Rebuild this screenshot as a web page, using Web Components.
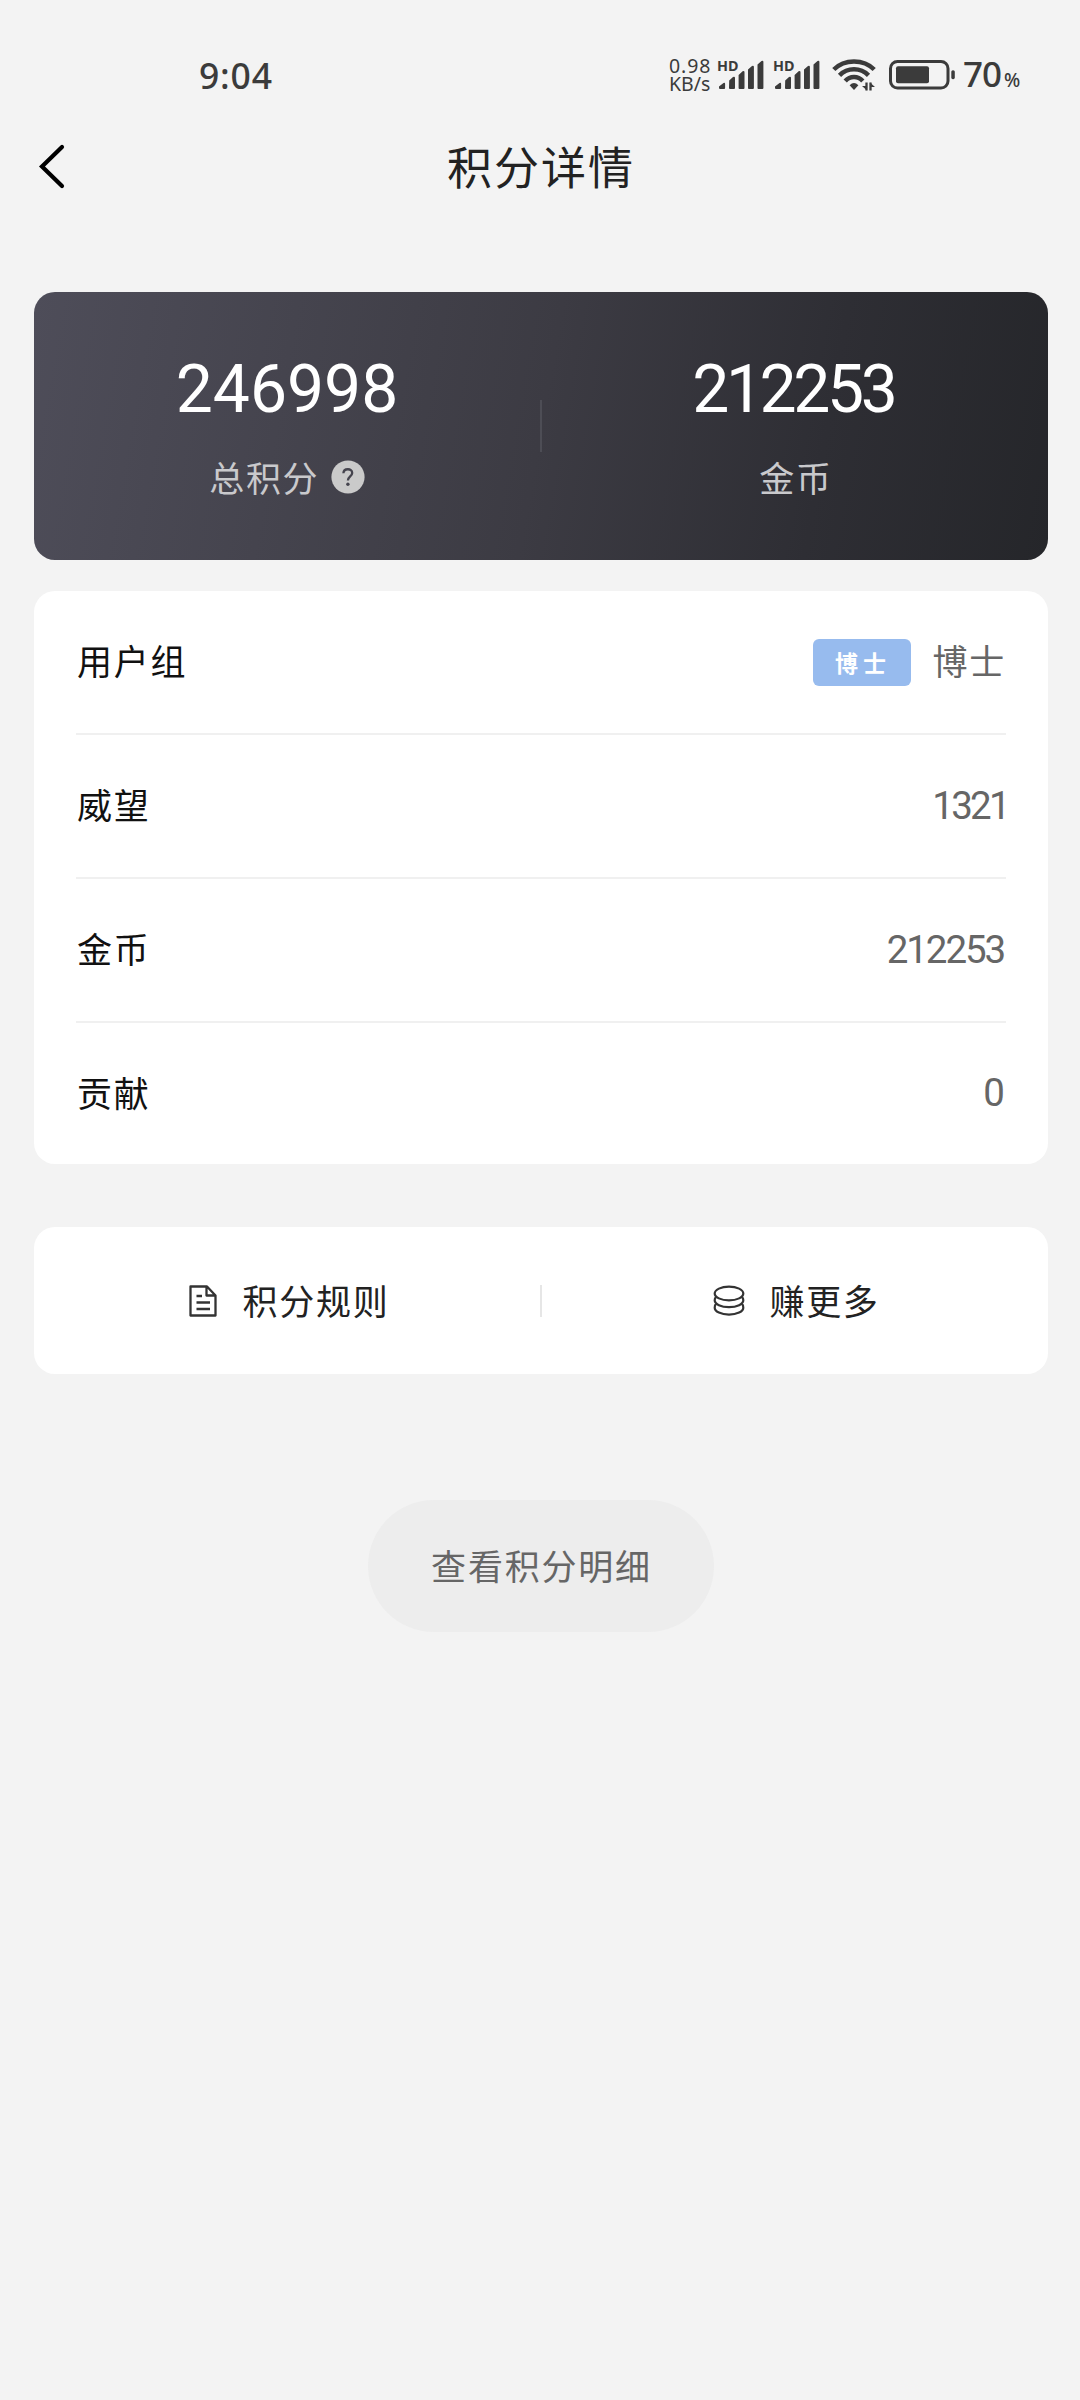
<!DOCTYPE html>
<html lang="zh-CN">
<head>
<meta charset="utf-8">
<title>积分详情</title>
<style>
html,body{margin:0;padding:0;background:#f3f3f3}
body{width:1080px;height:2400px;overflow:hidden;font-family:"Noto Sans CJK SC",sans-serif;color:#141414}
</style>
</head>
<body>
<points-page></points-page>
<script>
function define(name, html) {
  const t = document.createElement('template');
  t.innerHTML = html;
  customElements.define(name, class extends HTMLElement {
    constructor() {
      super();
      this.attachShadow({mode: 'open'}).appendChild(t.content.cloneNode(true));
    }
  });
}

define('signal-icon', `
<style>:host{display:block;width:48px;height:32px}svg{display:block;overflow:visible}</style>
<svg width="48" height="32" viewBox="0 0 48 32" fill="#3b3b3b">
  <text x="0" y="12.3" font-family="Noto Sans" font-weight="700" font-size="15" textLength="21.5" lengthAdjust="spacingAndGlyphs">HD</text>
  <path d="M2 27.5l4.5-3.5q1.6-.8 1.6 1v4q0 1-1 1h-4q-1.1 0-1.1-1zM12.200 21.500l3.800-3.500q2-.8 2 1v10q0 1-1 1h-4q-1 0-1-1zM21.600 16l4-3.800q1.900-.8 1.900 1v15.800q0 1-1 1h-4q-.9 0-.9-1zM31 10.500l4-3.600q1.900-.8 1.900 1v21.100q0 1-1 1h-4q-.9 0-.9-1zM40.500 5.500l4-3.600q1.900-.8 1.900 1v26.100q0 1-1 1h-4q-.9 0-.9-1z"/>
</svg>`);

define('wifi-icon', `
<style>:host{display:block;width:44px;height:34px}svg{display:block}</style>
<svg width="44" height="34" viewBox="0 0 44 34" fill="none" stroke="#3b3b3b" stroke-width="4.500">
  <path d="M1.800 11.500C12.500.800 31.500.800 42.200 11.500"/>
  <path d="M7.500 17.300C15.500 9.200 28.500 9.200 36.500 17.300"/>
  <path d="M13.200 23C18 17.700 26 17.700 30.800 23"/>
  <path d="M17.600 27.300q4.400-4.500 8.800 0L22 32z" fill="#3b3b3b" stroke="none"/>
  <path d="M34.500 24.500v8M38.500 32.500v-8" stroke-width="2.300"/>
  <path d="M35 32.500l-5-4.500h5zM38 24.500l5 4.500h-5z" fill="#3b3b3b" stroke="none"/>
</svg>`);

define('battery-icon', `
<style>:host{display:block;width:67px;height:30px}svg{display:block}</style>
<svg width="67" height="30" viewBox="0 0 67 30" fill="none">
  <rect x="1.500" y="1.500" width="57.500" height="26.500" rx="7" stroke="#3b3b3b" stroke-width="3"/>
  <rect x="7" y="6.300" width="33" height="17" rx="2" fill="#3b3b3b"/>
  <rect x="62.300" y="10.200" width="3.500" height="9" rx="1.600" fill="#3b3b3b"/>
</svg>`);

define('status-bar', `
<style>
:host{display:flex;align-items:center;height:150px;box-sizing:border-box;color:#3b3b3b;font-family:"Noto Sans",sans-serif}
.time{margin-left:199px;width:470px;font-size:35.500px;font-weight:500;letter-spacing:.8px;line-height:40px}
.speed{width:48px;font-size:19.500px;line-height:18.500px;white-space:nowrap}
.speed span{display:block}
.speed span:first-child{letter-spacing:.9px}
signal-icon{margin-right:8px}
wifi-icon{margin-left:3px;margin-right:13px}
battery-icon{margin-right:7px}
.pct{display:flex;align-items:baseline;padding-top:3px;font-size:35px;font-weight:500;line-height:40px;letter-spacing:-1px}
.pct small{font-size:20.500px;letter-spacing:0;margin-left:3px;transform:scaleX(.93);transform-origin:left}
</style>
<div class="time">9:04</div>
<div class="speed"><span>0.98</span><span>KB/s</span></div>
<signal-icon></signal-icon><signal-icon></signal-icon>
<wifi-icon></wifi-icon><battery-icon></battery-icon>
<div class="pct">70<small>%</small></div>`);

define('page-header', `
<style>
:host{display:grid;grid-template-columns:120px 1fr 120px;align-items:center;height:90px;margin-top:-29px}
svg{display:block;margin-left:36px}
h1{margin:0;padding-left:2px;text-align:center;font-size:45px;font-weight:400;line-height:60px;letter-spacing:2px;color:#222}
</style>
<svg width="32" height="46" viewBox="0 0 32 46" fill="none" stroke="#000" stroke-width="4.200" stroke-linecap="round"><path d="M26 4L6 23.500L26 43"/></svg>
<h1><slot></slot></h1>`);

define('help-icon', `
<style>:host{display:block;width:34px;height:34px}svg{display:block}</style>
<svg width="34" height="34" viewBox="0 0 34 34"><circle cx="17" cy="17" r="16.600" fill="#cacaca"/>
<path d="M12.400 13.300C12.600 7.900 21.200 8 21.200 12.900C21.200 16.300 16.900 16.500 16.900 20.500" fill="none" stroke="#45444e" stroke-width="2.300"/><circle cx="16.900" cy="24.200" r="1.700" fill="#45444e"/></svg>`);

define('score-stat', `
<style>
:host{flex:1;display:flex;flex-direction:column;align-items:center}
.n{margin-top:53px;font:400 66px/90px Roboto,sans-serif;letter-spacing:var(--track,0px);margin-right:calc(var(--track,0px) * -1);color:#fff}
.l{display:flex;align-items:center;gap:11.500px;margin-top:20px;margin-left:var(--nudge,0px);font-size:35px;line-height:44px;letter-spacing:1.700px;color:#c9c9cc}
</style>
<div class="n"><slot name="value"></slot></div>
<div class="l"><slot></slot></div>`);

define('score-card', `
<style>
:host{display:flex;align-items:flex-start;height:268px;border-radius:21px;background:linear-gradient(100deg,#4e4d59 0%,#3c3b43 50%,#2e2e34 77%,#25262a 100%)}
i{width:2px;height:52px;margin-top:108px;background:#4d4d55}
</style>
<slot name="left"></slot><i></i><slot name="right"></slot>`);

define('level-badge', `
<style>
:host{display:flex;align-items:center;justify-content:center;width:98px;height:47px;box-sizing:border-box;border-radius:6px;background:#97bbee;color:#fff;font-size:23px;font-weight:700;line-height:30px;letter-spacing:5px;padding-left:3px;margin:4px 22px 0 0}
</style><slot></slot>`);

define('info-row', `
<style>
:host{display:flex;align-items:center;justify-content:space-between;height:142px;border-bottom:2px solid #f0f0f0;font-size:35px;line-height:50px;letter-spacing:1.700px;color:#111}
:host(:last-child){border-bottom:0;height:141px}
.l{padding:0 0 4px 1px}
.v{display:flex;align-items:center;padding-bottom:4px;color:#666}
</style>
<div class="l"><slot></slot></div><div class="v"><slot name="value"></slot></div>`);

define('num-value', `
<style>:host{display:block;font:400 38.500px/50px Roboto,sans-serif;letter-spacing:var(--track,0px);margin-right:var(--shift,0px);padding-top:3px}</style><slot></slot>`);

define('info-card', `
<style>:host{display:block;height:573px;margin-top:31px;padding:0 42px;border-radius:21px;background:#fff}</style><slot></slot>`);

define('doc-icon', `
<style>:host{display:block;width:28px;height:32px}svg{display:block}</style>
<svg width="28" height="32" viewBox="0 0 28 32" fill="none" stroke="#333" stroke-width="2.300" stroke-linejoin="round"><path d="M1.500 1.500H18L26.500 10.500V30.500H1.500zM17.500 1.500V10.500H26.500"/><path d="M7.500 11h5.500M7.500 17.500h13.500M7.500 24h13.500"/></svg>`);

define('coins-icon', `
<style>:host{display:block;width:32px;height:32px}svg{display:block}</style>
<svg width="32" height="32" viewBox="0 0 32 32" fill="none" stroke="#333" stroke-width="2.200"><ellipse cx="16" cy="8.500" rx="14.300" ry="6.900"/><path d="M3 12Q1.700 13.200 1.700 15.300A14.300 6.900 0 0 0 30.300 15.300Q30.300 13.200 29 12M3 18.800Q1.700 20 1.700 22.700A14.300 6.900 0 0 0 30.300 22.700Q30.300 20 29 18.800"/></svg>`);

define('action-card', `
<style>
:host{display:flex;align-items:center;height:147px;margin-top:63px;border-radius:21px;background:#fff}
i{width:2px;height:32px;background:#e6e6e6}
</style>
<slot name="left"></slot><i></i><slot name="right"></slot>`);

define('action-item', `
<style>
:host{width:506px;box-sizing:border-box;display:flex;align-items:center;justify-content:center;gap:var(--gap,26px);padding-left:var(--nudge,0px);font-size:35px;line-height:50px;letter-spacing:1.700px;color:#222}
span{padding-bottom:1px}
</style><slot name="icon"></slot><span><slot></slot></span>`);

define('pill-button', `
<style>
:host{display:flex;align-items:center;justify-content:center;width:346px;height:132px;box-sizing:border-box;margin:126px auto 0;padding:0 0 2px 1px;border-radius:66px;background:#ededed;color:#666;font-size:35px;line-height:50px;letter-spacing:1.800px}
</style><slot></slot>`);

define('points-page', `
<style>
:host{display:block}
main{margin-top:81px;padding:0 32px 0 34px}
</style>
<status-bar></status-bar>
<page-header>积分详情</page-header>
<main>
  <score-card>
    <score-stat slot="left"><span slot="value">246998</span>总积分<help-icon></help-icon></score-stat>
    <score-stat slot="right" style="--track:-3.400px;--nudge:2px"><span slot="value">212253</span>金币</score-stat>
  </score-card>
  <info-card>
    <info-row>用户组<level-badge slot="value">博士</level-badge><span slot="value">博士</span></info-row>
    <info-row>威望<num-value slot="value" style="--track:-2.700px;--shift:-2px">1321</num-value></info-row>
    <info-row>金币<num-value slot="value" style="--track:-2.100px;--shift:2px">212253</num-value></info-row>
    <info-row>贡献<num-value slot="value" style="--shift:1px">0</num-value></info-row>
  </info-card>
  <action-card>
    <action-item slot="left" style="--nudge:4px"><doc-icon slot="icon"></doc-icon>积分规则</action-item>
    <action-item slot="right" style="--nudge:3px;--gap:24px"><coins-icon slot="icon"></coins-icon>赚更多</action-item>
  </action-card>
  <pill-button>查看积分明细</pill-button>
</main>`);
</script>
</body>
</html>
